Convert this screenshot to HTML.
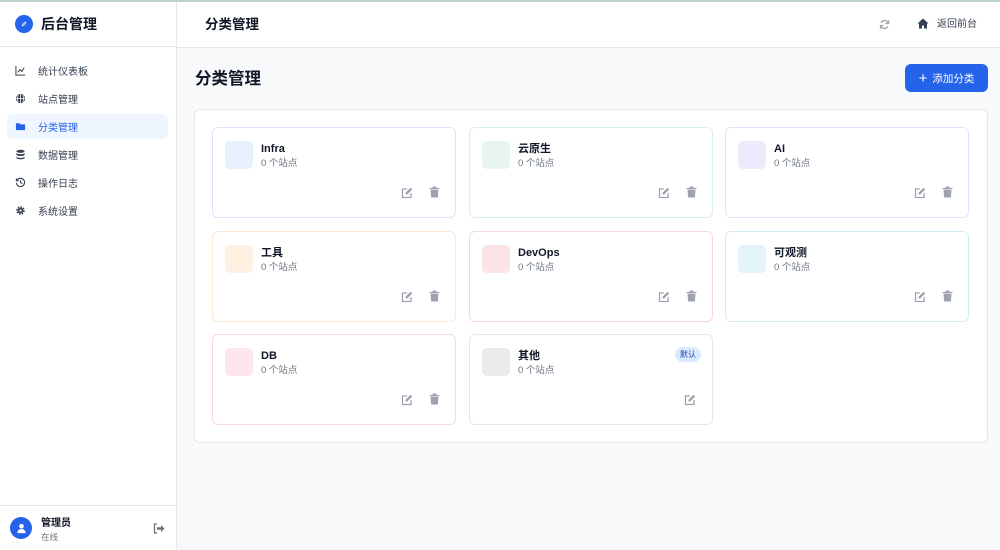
<!DOCTYPE html>
<html><head><meta charset="utf-8"><style>
*{box-sizing:border-box;margin:0;padding:0}
body{width:1000px;height:550px;overflow:hidden;font-family:"Liberation Sans","Noto Sans CJK SC",sans-serif;background:#f8f9fb;position:relative;color:#111827}
.topline{position:absolute;left:0;top:0;width:1000px;height:2px;background:#bcd3d4}
.side{position:absolute;left:0;top:2px;width:177px;height:548px;background:#fff;border-right:1px solid #e5e7eb}
.logo{height:45px;border-bottom:1px solid #e5e7eb;display:flex;align-items:center;padding-left:15px;font-weight:bold;font-size:14px}
.logo .c{width:18px;height:18px;border-radius:50%;background:#2563eb;margin-right:8px;display:flex;align-items:center;justify-content:center}
.nav{padding-top:11px}
.item{height:25px;margin:0 8px 3px 7px;border-radius:6px;display:flex;align-items:center;padding-left:8px;font-size:10px;color:#374151}
.item svg{width:11px;height:11px;margin-right:12px}
.item.act{background:#eff6ff;color:#2563eb}
.user{position:absolute;bottom:0;left:0;width:176px;height:45px;border-top:1px solid #e5e7eb;display:flex;align-items:center;padding-left:10px}
.av{width:22px;height:22px;border-radius:50%;background:#2563eb;margin-right:9px;display:flex;align-items:center;justify-content:center}
.header{position:absolute;left:177px;top:2px;width:823px;height:46px;background:#fff;border-bottom:1px solid #e5e7eb}
.h1{position:absolute;left:28px;top:14px;font-size:13.5px;line-height:18px;font-weight:bold}
.title{position:absolute;left:195px;top:68px;font-size:16.5px;line-height:22px;font-weight:bold}
.btn{position:absolute;left:905px;top:64px;width:83px;height:28px;background:#2563eb;border-radius:6px;color:#fff;font-size:10.5px;display:flex;align-items:center;justify-content:center}
.panel{position:absolute;left:194px;top:109px;width:794px;height:334px;background:#fff;border:1px solid #e5e7eb;border-radius:6px}
.card{position:absolute;width:244px;height:91px;background:#fff;border:1.5px solid;border-radius:6px}
.sq{position:absolute;left:12px;top:13px;width:28px;height:28px;border-radius:5px}
.nm{position:absolute;left:48px;top:14px;font-size:11px;line-height:14px;font-weight:bold}
.ct{position:absolute;left:48px;top:30px;font-size:9.5px;line-height:12px;color:#6b7280}
.ed{position:absolute;left:188px;top:58px}
.tr{position:absolute;left:216px;top:57px}
.badge{position:absolute;right:11px;top:12px;background:#dbeafe;color:#1e40af;font-size:8px;line-height:11px;padding:2px 5px;border-radius:8px}
</style></head><body>
<div class="topline"></div>
<div class="side">
 <div class="logo"><div class="c"><svg width="10" height="10" viewBox="0 0 10 10"><path d="M7.5 2.5L6 6 2.5 7.5 4 4z" fill="#fff"/><circle cx="5" cy="5" r="0.8" fill="#2563eb"/></svg></div>后台管理</div>
 <div class="nav">
  <div class="item"><svg viewBox="0 0 12 12"><path d="M1 1v10h10M3 8l2.5-3 2 2L10 3" stroke="#374151" fill="none" stroke-width="1.1"/></svg>统计仪表板</div>
  <div class="item"><svg viewBox="0 0 12 12"><circle cx="6" cy="6" r="5" fill="#374151"/><path d="M1 6h10M6 1v10M3.5 2c-1 2.5-1 5.5 0 8M8.5 2c1 2.5 1 5.5 0 8" stroke="#fff" stroke-width=".8" fill="none"/></svg>站点管理</div>
  <div class="item act"><svg viewBox="0 0 12 12"><path d="M1 2.5h4l1 1.2h5V10H1z" fill="#2563eb"/></svg>分类管理</div>
  <div class="item"><svg viewBox="0 0 12 12"><ellipse cx="6" cy="2.5" rx="4.5" ry="1.7" fill="#374151"/><path d="M1.5 4v2c0 1 2 1.7 4.5 1.7S10.5 7 10.5 6V4c0 1-2 1.7-4.5 1.7S1.5 5 1.5 4zM1.5 8v1.5c0 1 2 1.7 4.5 1.7s4.5-.7 4.5-1.7V8c0 1-2 1.7-4.5 1.7S1.5 9 1.5 8z" fill="#374151"/></svg>数据管理</div>
  <div class="item"><svg viewBox="0 0 12 12"><path d="M2.2 3.5A4.5 4.5 0 1 1 1.5 6.5M1.5 1.5v2.5h2.5M6 3.5V6l2 1.3" stroke="#374151" stroke-width="1.2" fill="none"/></svg>操作日志</div>
  <div class="item"><svg viewBox="0 0 12 12"><circle cx="6" cy="6" r="3.6" fill="none" stroke="#374151" stroke-width="2.2" stroke-dasharray="1.6 1.2"/><circle cx="6" cy="6" r="3" fill="#374151"/><circle cx="6" cy="6" r="1.2" fill="#fff"/></svg>系统设置</div>
 </div>
 <div class="user"><div class="av"><svg width="11" height="11" viewBox="0 0 12 12"><circle cx="6" cy="3.5" r="2.5" fill="#fff"/><path d="M1.5 11c0-3 2-4.5 4.5-4.5s4.5 1.5 4.5 4.5z" fill="#fff"/></svg></div>
  <div><div style="font-size:10px;font-weight:bold">管理员</div><div style="font-size:8.5px;color:#6b7280;margin-top:2px">在线</div></div>
  <svg style="position:absolute;left:153px;top:17px" width="12" height="11" viewBox="0 0 12 11"><path d="M4 1H1.5v9H4" stroke="#6b7280" stroke-width="1.3" fill="none"/><path d="M4 4.3h4V2l3.5 3.5L8 9V6.7H4z" fill="#6b7280"/></svg>
 </div>
</div>
<div class="header"><div class="h1">分类管理</div>
 <svg style="position:absolute;left:702px;top:17px" width="11" height="11" viewBox="0 0 12 12"><path d="M10 4.5A4.2 4.2 0 0 0 2.3 4M2 7.5A4.2 4.2 0 0 0 9.7 8" stroke="#9ca3af" stroke-width="1.4" fill="none"/><path d="M10.5 1.5v3.5H7M1.5 10.5V7H5" stroke="#9ca3af" stroke-width="1.2" fill="none"/></svg>
 <svg style="position:absolute;left:740px;top:16px" width="12" height="11" viewBox="0 0 12 11"><path d="M6 .5L.5 5.5h1.5V10.5h3V7.5h2v3h3V5.5h1.5z" fill="#374151"/></svg>
 <div style="position:absolute;left:760px;top:16px;font-size:10px;line-height:14px;color:#374151">返回前台</div>
</div>
<div class="title">分类管理</div>
<div class="btn"><span style="font-size:15px;margin-right:5px;line-height:1">+</span>添加分类</div>
<div class="panel"></div>
<div id="cards"></div>
<script>
var d=[["Infra","#dbe6fe","#e8efff",212,127],["云原生","#d9f1e6","#e6f6ee",469,127],["AI","#e6e0fc","#eeeafe",725,127],["工具","#fde8d0","#fef1e1",212,231],["DevOps","#fbd6d6","#fde4e4",469,231],["可观测","#d3ecf3","#e3f3f9",725,231],["DB","#fbd6e4","#fde6ee",212,334],["其他","#e5e7eb","#ebebed",469,334]];
var ed='<svg width="12" height="12" viewBox="0 0 12 12"><path d="M6 2H1.5v8.5H10V6" stroke="#9ca3af" stroke-width="1.3" fill="none"/><path d="M9.5.8l1.7 1.7-5 5H4.5V5.8z" fill="#9ca3af"/></svg>';
var tr='<svg width="11" height="12" viewBox="0 0 11 12"><path d="M.5 2h10V3H.5zM3.8.5h3.4l.4 1.5H3.4zM1.5 3.5h8l-.6 8H2.1z" fill="#9ca3af"/></svg>';
var h='';d.forEach(function(c,i){var last=i==7;h+='<div class="card" style="left:'+c[3]+'px;top:'+c[4]+'px;border-color:'+c[1]+'"><div class="sq" style="background:'+c[2]+'"></div><div class="nm">'+c[0]+'</div><div class="ct">0 个站点</div>'+(last?'<div class="badge">默认</div><div class="ed" style="left:214px">'+ed+'</div>':'<div class="ed">'+ed+'</div><div class="tr">'+tr+'</div>')+'</div>'});
document.getElementById('cards').innerHTML=h;
</script>
</body></html>
